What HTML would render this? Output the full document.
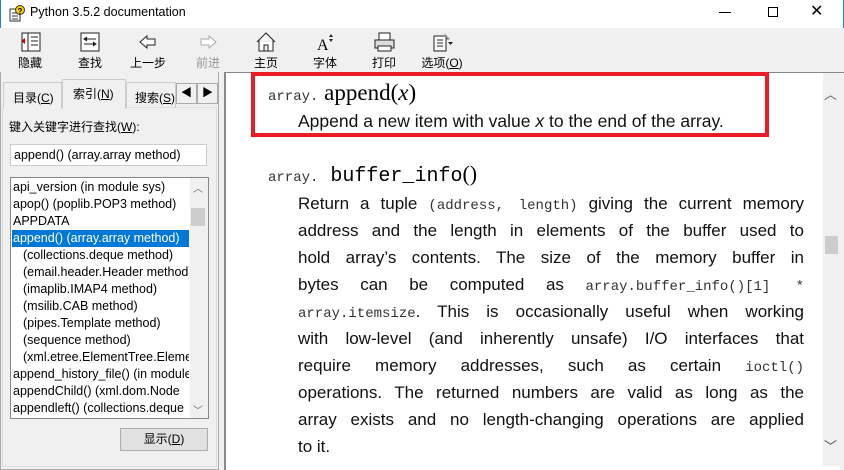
<!DOCTYPE html>
<html><head><meta charset="utf-8"><style>
*{margin:0;padding:0;box-sizing:border-box}
body{width:844px;height:470px;background:#f0f0f0;position:relative;overflow:hidden;font-family:"Liberation Sans","Noto Sans CJK SC",sans-serif;font-size:12px;color:#000}
.a{position:absolute}
.tb{text-align:center;width:60px;font-size:12px}
.tb svg{display:block;margin:0 auto 2px}
.li{position:absolute;left:13px;height:17px;line-height:17px;white-space:nowrap;font-size:12.5px;width:176px;overflow:hidden}
.p{position:absolute;left:298px;width:506px;font-size:17px;line-height:27px;text-align:justify;text-align-last:justify;white-space:nowrap;font-family:"Liberation Sans",sans-serif;color:#111}
.m{font-family:"Liberation Mono",monospace;font-size:14px;color:#333}
.s{font-family:"Liberation Serif",serif}
</style></head><body>
<div class="a" style="left:0;top:0;width:844px;height:28px;background:#fff;border-left:1px solid #1883d7;border-right:1px solid #1883d7"></div>
<svg class="a" style="left:9px;top:5px" width="16" height="17"><rect x="1" y="4" width="10" height="12" fill="#fff" stroke="#333"/><path d="M3 8h6M3 11h6M3 14h6" stroke="#333"/><circle cx="11" cy="5" r="4.5" fill="#f5d000" stroke="#333"/><text x="8.5" y="9" font-size="8" font-weight="bold">?</text></svg>
<div class="a" style="left:30px;top:5px;font-size:12.5px">Python 3.5.2 documentation</div>
<div class="a" style="left:719px;top:12px;width:12px;height:1px;background:#000"></div>
<div class="a" style="left:768px;top:7px;width:10px;height:10px;border:1px solid #000"></div>
<div class="a" style="left:810px;top:1px;font-size:16px">✕</div>
<div class="a tb" style="left:0;top:32px"><svg width="22" height="20"><rect x="3" y="1" width="18" height="18" fill="#fff" stroke="#222"/><path d="M9 1v18M12 5h7M12 9h7M12 13h7" stroke="#222"/><path d="M2 9l4-3v6z" fill="#c00"/></svg>隐藏</div>
<div class="a tb" style="left:60px;top:32px"><svg width="22" height="20"><rect x="2" y="1" width="18" height="18" fill="#fff" stroke="#222"/><path d="M5 7h12M5 12h12M8 5l-3 2 3 2M14 10l3 2-3 2" stroke="#222"/></svg>查找</div>
<div class="a tb" style="left:118px;top:32px"><svg width="22" height="20"><path d="M3 10l7-6v3h8v6h-8v3z" fill="#fff" stroke="#222"/></svg>上一步</div>
<div class="a tb" style="left:178px;top:32px;color:#999"><svg width="22" height="20"><path d="M19 10l-7-6v3H4v6h8v3z" fill="#fff" stroke="#aaa"/></svg>前进</div>
<div class="a tb" style="left:236px;top:32px"><svg width="22" height="20"><path d="M2 10L11 1l9 9M4 8v11h14V8M9 19v-6h4v6" fill="#fff" stroke="#222"/></svg>主页</div>
<div class="a tb" style="left:295px;top:32px"><svg width="22" height="20"><text x="3" y="18" font-size="16" font-family="Liberation Serif">A</text><path d="M17 2l2 3h-4zM17 10l2-3h-4z" fill="#222"/></svg>字体</div>
<div class="a tb" style="left:354px;top:32px"><svg width="22" height="20"><rect x="6" y="1" width="11" height="7" fill="#fff" stroke="#222"/><rect x="2" y="8" width="19" height="8" fill="#ddd" stroke="#222"/><rect x="5" y="14" width="13" height="5" fill="#fff" stroke="#222"/></svg>打印</div>
<div class="a tb" style="left:412px;top:32px"><svg width="22" height="20"><rect x="3" y="4" width="12" height="15" fill="#fff" stroke="#222"/><path d="M6 8h6M6 11h6M6 14h6" stroke="#222"/><path d="M13 1l6 6-3 1z" fill="#888"/><path d="M17 10h5l-2.5 3z" fill="#222"/></svg>选项(<u>O</u>)</div>
<!-- left pane -->
<div class="a" style="left:0;top:72px;width:219px;height:398px;border:1px solid #aaa;border-top:none;background:#f0f0f0"></div>
<div class="a" style="left:2px;top:107px;width:215px;height:360px;border:1px solid #ddd;background:#f0f0f0"></div>
<div class="a" style="left:3px;top:82px;width:59px;height:26px;border:1px solid #ccc;border-bottom:none;background:#f0f0f0;padding:6px 0 0 9px">目录(<u>C</u>)</div>
<div class="a" style="left:62px;top:79px;width:64px;height:30px;border:1px solid #ccc;border-bottom:none;background:#f0f0f0;padding:5px 0 0 10px">索引(<u>N</u>)</div>
<div class="a" style="left:126px;top:82px;width:50px;height:26px;border:1px solid #ccc;border-bottom:none;padding:6px 0 0 8px;overflow:hidden;white-space:nowrap">搜索(<u>S</u>)</div>
<div class="a" style="left:176px;top:83px;width:21px;height:21px;border:1px solid #aaa;background:#f0f0f0;text-align:center;line-height:19px;font-size:11px">◀</div>
<div class="a" style="left:197px;top:83px;width:21px;height:21px;border:1px solid #aaa;background:#f0f0f0;text-align:center;line-height:19px;font-size:11px">▶</div>
<div class="a" style="left:9px;top:118px">键入关键字进行查找(<u>W</u>):</div>
<div class="a" style="left:10px;top:144px;width:197px;height:22px;border:1px solid #ccc;background:#fff;padding:3px 0 0 3px;font-size:12.5px">append() (array.array method)</div>
<div class="a" style="left:10px;top:177px;width:199px;height:242px;border:1px solid #888;background:#fff"></div>
<div class="a" style="left:190px;top:178px;width:18px;height:240px;background:#f0f0f0"></div>
<div class="a" style="left:191px;top:208px;width:14px;height:18px;background:#cdcdcd"></div>
<div class="a" style="left:193px;top:180px;font-size:10px;color:#666">︿</div>
<div class="a" style="left:193px;top:402px;font-size:10px;color:#666">﹀</div>
<div class="li" style="top:179px">api_version (in module sys)</div>
<div class="li" style="top:196px">apop() (poplib.POP3 method)</div>
<div class="li" style="top:213px">APPDATA</div>
<div class="li" style="top:230px;background:#0078d7;color:#fff;width:177px;left:12px;padding-left:1px">append() (array.array method)</div>
<div class="li" style="top:247px;padding-left:10px">(collections.deque method)</div>
<div class="li" style="top:264px;padding-left:10px">(email.header.Header method)</div>
<div class="li" style="top:281px;padding-left:10px">(imaplib.IMAP4 method)</div>
<div class="li" style="top:298px;padding-left:10px">(msilib.CAB method)</div>
<div class="li" style="top:315px;padding-left:10px">(pipes.Template method)</div>
<div class="li" style="top:332px;padding-left:10px">(sequence method)</div>
<div class="li" style="top:349px;padding-left:10px">(xml.etree.ElementTree.Element</div>
<div class="li" style="top:366px">append_history_file() (in module</div>
<div class="li" style="top:383px">appendChild() (xml.dom.Node</div>
<div class="li" style="top:400px">appendleft() (collections.deque</div>
<div class="a" style="left:120px;top:428px;width:88px;height:23px;border:1px solid #adadad;background:#e1e1e1;text-align:center;line-height:21px">显示(<u>D</u>)</div>
<!-- content -->
<div class="a" style="left:224px;top:72px;width:620px;height:398px;border-left:2px solid #888;border-top:1px solid #888;background:#fff"></div>
<div class="a" style="left:823px;top:73px;width:17px;height:393px;background:#f0f0f0"></div>
<div class="a" style="left:825px;top:236px;width:13px;height:18px;background:#cdcdcd"></div>
<div class="a" style="left:824px;top:84px;font-size:13px;color:#555">︿</div>
<div class="a" style="left:824px;top:436px;font-size:13px;color:#555">﹀</div>
<div class="a" style="left:840px;top:73px;width:4px;height:397px;background:#f0f0f0"></div>
<div class="a" style="left:251px;top:72px;width:518px;height:65px;border:4px solid #ed1c24"></div>
<div class="a" style="left:268px;top:80px;white-space:nowrap"><span class="m" style="font-size:14px">array.</span><span class="s" style="font-size:23px"> append(<i>x</i>)</span></div>
<div class="a" style="left:298px;top:111px;font-size:17.5px;color:#111">Append a new item with value <i>x</i> to the end of the array.</div>
<div class="a" style="left:268px;top:161px;white-space:nowrap"><span class="m" style="font-size:14px">array.</span><span style="font-size:20px;font-family:'Liberation Mono',monospace"> buffer_info</span><span class="s" style="font-size:22px">()</span></div>
<div class="p" style="top:190px">Return a tuple <span class="m">(address, length)</span> giving the current memory</div>
<div class="p" style="top:217px">address and the length in elements of the buffer used to</div>
<div class="p" style="top:244px">hold array’s contents. The size of the memory buffer in</div>
<div class="p" style="top:271px">bytes can be computed as <span class="m">array.buffer_info()[1] *</span></div>
<div class="p" style="top:298px"><span class="m">array.itemsize</span>. This is occasionally useful when working</div>
<div class="p" style="top:325px">with low-level (and inherently unsafe) I/O interfaces that</div>
<div class="p" style="top:352px">require memory addresses, such as certain <span class="m">ioctl()</span></div>
<div class="p" style="top:379px">operations. The returned numbers are valid as long as the</div>
<div class="p" style="top:406px">array exists and no length-changing operations are applied</div>
<div class="p" style="top:433px;text-align-last:left">to it.</div>
</body></html>
